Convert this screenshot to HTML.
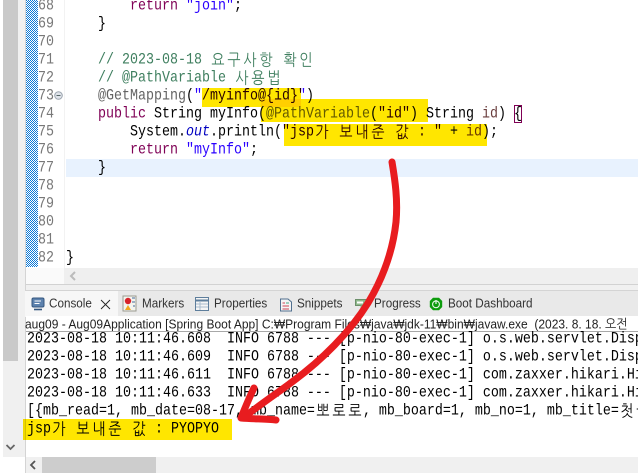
<!DOCTYPE html>
<html lang="ko"><head><meta charset="utf-8"><style>
html,body{margin:0;padding:0;background:#fff}
#p{position:relative;width:638px;height:473px;overflow:hidden;background:#fff;font-family:"Liberation Mono","NanumGothic",monospace}
.a{position:absolute}
.l{position:absolute;white-space:pre;font:13.33px/18px "Liberation Mono","NanumGothic",monospace;color:#000;height:18px;transform:scaleY(1.16);margin-top:1px}
.n{position:absolute;left:38px;width:25px;font:13.33px/18px "Liberation Mono",monospace;color:#787878;white-space:pre;transform:scaleY(1.16);margin-top:1px}
.k{display:inline-block;width:16px;text-align:center;font:14px/18px "NanumGothic","Noto Sans CJK KR",sans-serif;vertical-align:top}
.kw{color:#7f0055}.st{color:#2a00ff}.cm{color:#3f7f5f}.an{color:#646464}.v{color:#6a3e3e}.f{color:#0000c0;font-style:italic}
.t{position:absolute;top:295px;font:11.7px/18px "Liberation Sans",sans-serif;color:#333;white-space:pre;transform:scaleY(1.1)}
.y{position:absolute;background:#ffe600;mix-blend-mode:multiply}
</style></head><body><div id="p">
<div class="a" style="left:3px;top:0;width:15px;height:361px;background:#c9c9c9"></div>
<div class="a" style="left:3px;top:361px;width:15px;height:96px;background:#f0f0f0"></div>
<div class="a" style="left:18px;top:0;width:7px;height:457px;background:#f0f0f0"></div>
<div class="a" style="left:25px;top:0;width:1px;height:473px;background:#d4d4d4"></div>
<svg class="a" style="left:26px;top:0" width="12" height="267" shape-rendering="crispEdges"><defs><pattern id="c" width="2" height="2" patternUnits="userSpaceOnUse"><rect width="2" height="2" fill="#fff"/><rect width="1" height="1" fill="#0a78d7"/><rect x="1" y="1" width="1" height="1" fill="#0a78d7"/></pattern></defs><rect width="12" height="267" fill="url(#c)"/></svg>
<div class="a" style="left:38px;top:0;width:26px;height:268px;background:#fff;border-right:1px solid #f2f2f2"></div>
<div class="a" style="left:66px;top:159px;width:572px;height:18px;background:#e8f2fe"></div>

<div class="n" style="top:-3px">68</div><div class="n" style="top:15px">69</div><div class="n" style="top:33px">70</div><div class="n" style="top:51px">71</div><div class="n" style="top:69px">72</div><div class="n" style="top:87px">73</div><div class="n" style="top:105px">74</div><div class="n" style="top:123px">75</div><div class="n" style="top:141px">76</div><div class="n" style="top:159px">77</div><div class="n" style="top:177px">78</div><div class="n" style="top:195px">79</div><div class="n" style="top:213px">80</div><div class="n" style="top:231px">81</div><div class="n" style="top:249px">82</div>
<svg class="a" style="left:54px;top:91px" width="9" height="9"><circle cx="4.5" cy="4.5" r="3.8" fill="#dfe3ea" stroke="#9aa3ad"/><path d="M2.5 4.5H6.5" stroke="#566" stroke-width="1"/></svg>

<div class="l" style="left:66px;top:-3px">        <span class="kw">return</span> <span class="st">"join"</span>;</div>
<div class="l" style="left:66px;top:15px">    }</div>
<div class="l" style="left:66px;top:51px;color:#3f7f5f">    // 2023-08-18 <span class="k">요</span><span class="k">구</span><span class="k">사</span><span class="k">항</span> <span class="k">확</span><span class="k">인</span></div>
<div class="l" style="left:66px;top:69px;color:#3f7f5f">    // @PathVariable <span class="k">사</span><span class="k">용</span><span class="k">법</span></div>
<div class="l" style="left:66px;top:87px">    <span class="an">@GetMapping</span>(<span class="st">"/myinfo@{id}"</span>)</div>
<div class="l" style="left:66px;top:105px">    <span class="kw">public</span> String myInfo(<span class="an">@PathVariable</span>(<span class="st">"id"</span>) String <span class="v">id</span>) {</div>
<div class="l" style="left:66px;top:123px">        System.<span class="f">out</span>.println(<span class="st">"jsp<span class="k">가</span> <span class="k">보</span><span class="k">내</span><span class="k">준</span> <span class="k">값</span> : "</span> + <span class="v">id</span>);</div>
<div class="l" style="left:66px;top:141px">        <span class="kw">return</span> <span class="st">"myInfo"</span>;</div>
<div class="l" style="left:66px;top:159px">    }</div>
<div class="l" style="left:66px;top:249px">}</div>
<div class="a" style="left:514px;top:105px;width:6px;height:16px;border:1px solid #7f0055"></div>

<div class="y" style="left:202px;top:88px;width:99px;height:19px"></div>
<div class="y" style="left:261px;top:99px;width:167px;height:23px"></div>
<div class="y" style="left:284px;top:124px;width:203px;height:22px"></div>

<div class="a" style="left:64px;top:268px;width:574px;height:16px;background:#efefef"></div>
<div class="a" style="left:26px;top:268px;width:38px;height:16px;background:#fafafa"></div>
<svg class="a" style="left:68px;top:270px" width="10" height="12"><path d="M7 2L3 6L7 10" fill="none" stroke="#bbb" stroke-width="2"/></svg>
<div class="a" style="left:26px;top:284px;width:612px;height:1px;background:#d2d2d2"></div>
<div class="a" style="left:26px;top:285px;width:612px;height:5px;background:#f0f0f0"></div>
<div class="a" style="left:26px;top:290px;width:612px;height:1px;background:#d4d4d4"></div>
<div class="a" style="left:26px;top:291px;width:612px;height:25px;background:#e9e9e9"></div>
<div class="a" style="left:25px;top:291px;width:93px;height:26px;background:#f7f7f7"></div>

<svg class="a" style="left:31px;top:297px" width="14" height="14"><rect x="1" y="1" width="12" height="9" rx="1.5" fill="#5d82ae" stroke="#35577f"/><path d="M3.5 4H10M3.5 6.5H8.5" stroke="#fff"/><path d="M3 12.5H11" stroke="#35577f" stroke-width="1.6"/></svg>
<div class="t" style="left:49px">Console</div>
<svg class="a" style="left:100px;top:299px" width="11" height="11"><path d="M1 1L10 10M10 1L1 10" stroke="#222" stroke-width=".9"/></svg>
<svg class="a" style="left:122px;top:295px" width="15" height="17"><rect x="1" y="1" width="13" height="15" fill="#f4f4ee" stroke="#9a9a90"/><circle cx="6" cy="6" r="3.2" fill="#d8232a"/><path d="M6 10L9 15H3Z" fill="#f1a81f"/><path d="M10 3H13M10 7H13M11 11H13" stroke="#7f97b5" stroke-width="1.4"/></svg>
<div class="t" style="left:142px">Markers</div>
<svg class="a" style="left:195px;top:297px" width="14" height="14"><rect x=".5" y=".5" width="13" height="13" fill="#f5f5f5" stroke="#5e7e9c"/><path d="M.5 3.5H13.5" stroke="#5e7e9c" stroke-width="2"/><path d="M1 7H13M1 10H13M5 4V13" stroke="#a9bccd"/></svg>
<div class="t" style="left:214px">Properties</div>
<svg class="a" style="left:279px;top:297px" width="14" height="15"><path d="M1.5 2H9L12.5 5V14H1.5Z" fill="#f4f4f4" stroke="#51708f"/><path d="M3.5 6H6M3.5 9H10M3.5 12H10" stroke="#c45" stroke-width="1"/><path d="M7 6H10" stroke="#4a8"/></svg>
<div class="t" style="left:297px">Snippets</div>
<svg class="a" style="left:355px;top:299px" width="15" height="11"><rect x=".5" y=".5" width="14" height="6" fill="#8fb98c" stroke="#6c8f6a"/><rect x="2" y="2.5" width="6" height="2" fill="#fff"/><rect x="5.5" y="6.5" width="6" height="4" fill="#8fb98c"/></svg>
<div class="t" style="left:374px">Progress</div>
<svg class="a" style="left:429px;top:297px" width="14" height="14"><path d="M4 .8H10L13.2 4V10L10 13.2H4L.8 10V4Z" fill="#0d9c0d"/><circle cx="7" cy="7.3" r="3.4" fill="none" stroke="#e8f7e8" stroke-width="1.1"/><path d="M7 3V7" stroke="#e8f7e8" stroke-width="1.2"/></svg>
<div class="t" style="left:448px">Boot Dashboard</div>

<div class="a" style="left:26px;top:316px;width:612px;height:15px;background:#fff"></div>
<div class="a" style="left:25px;top:315px;white-space:pre;font:12px/18px 'Liberation Sans','NanumGothic',sans-serif;color:#222;transform:scaleY(1.1)">aug09 - Aug09Application [Spring Boot App] C:₩Program Files₩java₩jdk-11₩bin₩javaw.exe  (2023. 8. 18. 오전</div>
<div class="a" style="left:26px;top:331px;width:612px;height:1px;background:#a8a8a8"></div>

<div class="l" style="left:27px;top:330px">2023-08-18 10:11:46.608  INFO 6788 --- [p-nio-80-exec-1] o.s.web.servlet.Disp</div>
<div class="l" style="left:27px;top:348px">2023-08-18 10:11:46.609  INFO 6788 --- [p-nio-80-exec-1] o.s.web.servlet.Disp</div>
<div class="l" style="left:27px;top:366px">2023-08-18 10:11:46.611  INFO 6788 --- [p-nio-80-exec-1] com.zaxxer.hikari.Hi</div>
<div class="l" style="left:27px;top:384px">2023-08-18 10:11:46.633  INFO 6788 --- [p-nio-80-exec-1] com.zaxxer.hikari.Hi</div>
<div class="l" style="left:27px;top:402px">[{mb_read=1, mb_date=08-17, mb_name=<span class="k">뽀</span><span class="k">로</span><span class="k">로</span>, mb_board=1, mb_no=1, mb_title=<span class="k">첫</span><span class="k">글</span></div>
<div class="l" style="left:27px;top:420px">jsp<span class="k">가</span> <span class="k">보</span><span class="k">내</span><span class="k">준</span> <span class="k">값</span> : PYOPYO</div>
<div class="y" style="left:23px;top:419px;width:209px;height:21px"></div>

<svg class="a" style="left:5px;top:443px" width="11" height="10"><path d="M1.5 2L5.5 6L9.5 2" fill="none" stroke="#666" stroke-width="1.8"/></svg>
<div class="a" style="left:26px;top:457px;width:612px;height:16px;background:#f0f0f0"></div>
<div class="a" style="left:42px;top:457px;width:114px;height:16px;background:#cdcdcd"></div>
<svg class="a" style="left:28px;top:460px" width="10" height="10"><path d="M7 1L3 5L7 9" fill="none" stroke="#555" stroke-width="1.8"/></svg>

<svg class="a" style="left:0;top:0" width="638" height="473"><path d="M392 162C395 180 398 200 396 222C393 250 383 278 368 303C350 332 322 360 292 382C276 394 258 406 243 418" fill="none" stroke="#e81c1f" stroke-width="7" stroke-linecap="round"/><path d="M254 388C249 398 245 408 241 418C255 419 266 419 276 420" fill="none" stroke="#e81c1f" stroke-width="7" stroke-linecap="round" stroke-linejoin="round"/></svg>
</div></body></html>
